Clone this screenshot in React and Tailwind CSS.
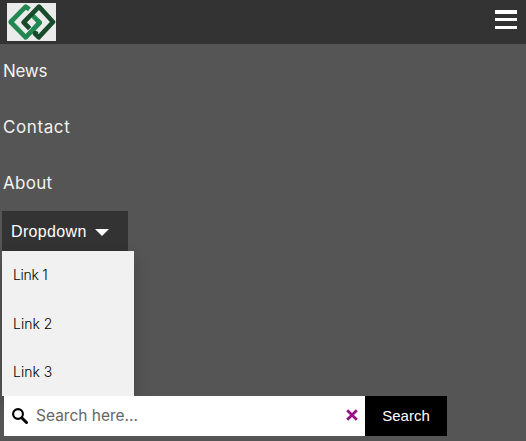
import React from "react";

const navItems = [
  { label: "News", spacing: "tracking-[-0.3px]" },
  { label: "Contact", spacing: "tracking-[0.6px]" },
  { label: "About", spacing: "tracking-[0.3px]" },
];

function Logo() {
  return (
    <svg className="block h-[38px] w-[49px]" viewBox="0 0 147 114" role="img" aria-label="Logo">
      <rect width="147" height="114" fill="#ebebeb" />
      <g fill="none" strokeWidth="14" strokeLinejoin="round">
        <path d="M67 19L56 11L11 57L56 103L98 59L80 41L76 45" stroke="#208850" />
        <path d="M68 77L50 58L96 11L138 57L95 103L84 92L88 84" stroke="#174b2c" />
        <path d="M77 81L98 59L91 52" stroke="#208850" />
      </g>
    </svg>
  );
}

export default function App() {
  return (
    <div className="flex h-[441px] w-[526px] flex-col overflow-hidden bg-[#555] font-['Inter','Open_Sans',sans-serif]">
      <header className="flex h-11 shrink-0 items-start justify-between bg-[#333] pt-[3px] pr-[9px] pl-[7px]">
        <Logo />
        <button aria-label="Menu" className="mt-[7px] flex w-[22px] flex-col">
          <span className="h-1 w-full bg-white" />
          <span className="mt-1 h-[3px] w-full bg-white" />
          <span className="mt-[5px] h-[3px] w-full bg-white" />
        </button>
      </header>

      <nav className="flex h-[167px] shrink-0 flex-col pl-[3px]">
        {navItems.map((item) => (
          <a key={item.label} className={`flex h-14 shrink-0 items-center self-start text-[17px] text-[#f2f2f2] ${item.spacing}`}>
            {item.label}
          </a>
        ))}
      </nav>

      <button className="ml-[2px] flex h-10 w-[126px] shrink-0 items-center bg-[#333] pl-[9px] font-['Liberation_Sans',sans-serif] text-[16px] text-white">
        <span className="w-[84px] pt-px text-left tracking-[0.35px]">Dropdown</span>
        <svg className="mt-[2px] h-[7px] w-[14px]" viewBox="0 0 14 7">
          <path d="M0 0H14L7 7Z" fill="white" />
        </svg>
      </button>
      <div className="ml-[2px] flex h-[145px] w-[132px] shrink-0 flex-col bg-[#f1f1f1] pl-[11px] text-[14px] font-light text-black shadow-[0_8px_16px_0_rgba(0,0,0,0.2)]">
        <a className="flex h-[49px] items-center pb-[2px] tracking-[-0.3px]">Link 1</a>
        <a className="flex h-12 items-center pb-[2px]">Link 2</a>
        <a className="flex h-12 items-center pb-[2px]">Link 3</a>
      </div>

      <form className="relative ml-1 flex h-10 w-[443px] shrink-0">
        <div className="flex w-[361px] items-center bg-white pr-[7px] pl-2">
          <svg className="h-4 w-4" viewBox="0 0 16 16" fill="none" stroke="black">
            <circle cx="6" cy="6" r="4.9" strokeWidth="2.1" />
            <path d="M9.7 9.7L14.5 14.5" strokeWidth="3" strokeLinecap="round" />
          </svg>
          <span className="ml-2 grow text-[15.5px] text-[#666]">Search here...</span>
          <svg className="mb-[2px] h-3 w-3" viewBox="0 0 12 12">
            <path d="M1.2 1.2L10.8 10.8M10.8 1.2L1.2 10.8" stroke="#960f87" strokeWidth="2.7" />
          </svg>
        </div>
        <button className="w-[82px] bg-black font-['Liberation_Sans',sans-serif] text-[15px] text-white">Search</button>
      </form>
    </div>
  );
}
